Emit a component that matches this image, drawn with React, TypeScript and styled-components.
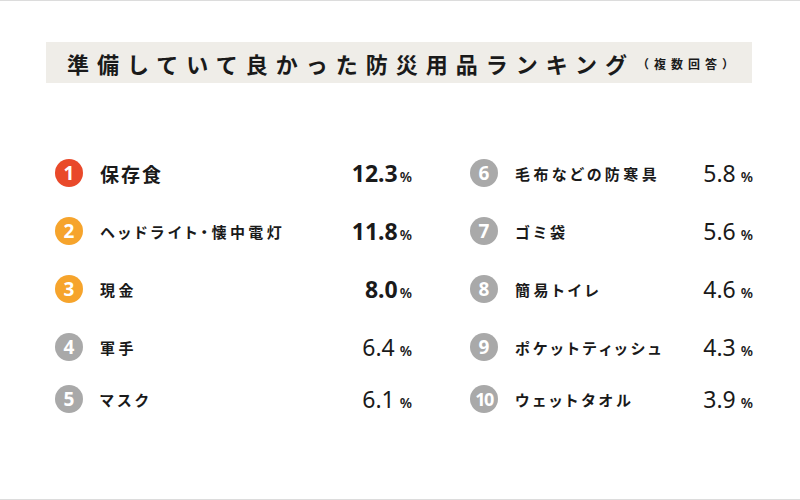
import { createGlobalStyle, styled } from 'styled-components';

const GlobalStyle = createGlobalStyle`
  body {
    margin: 0;
    background: #fff;
    font-family: "Noto Sans", "Noto Sans CJK JP", sans-serif;
    color: #1a1a1a;
  }
`;

type Item = { rank: number; label: string; value: string };

const left: Item[] = [
  { rank: 1, label: '保存食', value: '12.3' },
  { rank: 2, label: 'ヘッドライト・懐中電灯', value: '11.8' },
  { rank: 3, label: '現金', value: '8.0' },
  { rank: 4, label: '軍手', value: '6.4' },
  { rank: 5, label: 'マスク', value: '6.1' },
];

const right: Item[] = [
  { rank: 6, label: '毛布などの防寒具', value: '5.8' },
  { rank: 7, label: 'ゴミ袋', value: '5.6' },
  { rank: 8, label: '簡易トイレ', value: '4.6' },
  { rank: 9, label: 'ポケットティッシュ', value: '4.3' },
  { rank: 10, label: 'ウェットタオル', value: '3.9' },
];

const badgeColor = (rank: number) => {
  if (rank === 1) return '#e9492a';
  if (rank <= 3) return '#f6a42c';
  return '#a9a9a9';
};

const Row = ({ item }: { item: Item }) => (
  <RowWrap>
    <Badge $color={badgeColor(item.rank)} $small={item.rank >= 10}>
      {item.rank}
    </Badge>
    <Label $top={item.rank === 1}>{item.label}</Label>
    <Value $bold={item.rank <= 3}>
      {item.value}
      <Percent $bold={item.rank <= 3}>%</Percent>
    </Value>
  </RowWrap>
);

const App = () => {
  return (
    <>
      <GlobalStyle />
      <Frame>
        <TitleBand>
          <Title>準備していて良かった防災用品ランキング</Title>
          <Sub>（複数回答）</Sub>
        </TitleBand>
        <Columns>
          <Column>
            {left.map((it) => (
              <Row key={it.rank} item={it} />
            ))}
          </Column>
          <Column>
            {right.map((it) => (
              <Row key={it.rank} item={it} />
            ))}
          </Column>
        </Columns>
      </Frame>
    </>
  );
};

export default App;

const Frame = styled.div`
  width: 800px;
  height: 500px;
  box-sizing: border-box;
  border-top: 1px solid #dcdcdc;
  border-bottom: 1px solid #dcdcdc;
  padding: 41px 48px 0 46px;
`;

const TitleBand = styled.div`
  height: 41px;
  background: #efede8;
  display: flex;
  align-items: center;
  padding-left: 21px;
`;

const Title = styled.h1`
  margin: 0;
  font-family: "Noto Sans CJK JP", sans-serif;
  font-size: 22px;
  font-weight: 700;
  letter-spacing: 8px;
  color: #1a1a1a;
`;

const Sub = styled.span`
  font-family: "Noto Sans CJK JP", sans-serif;
  font-size: 12px;
  font-weight: 700;
  letter-spacing: 5px;
  margin-left: 2px;
  margin-top: 2px;
  color: #1a1a1a;
`;

const Columns = styled.div`
  display: grid;
  grid-template-columns: 357px 283px;
  column-gap: 58px;
  margin-top: 76px;
  padding-left: 9px;
`;

const Column = styled.div`
  display: flex;
  flex-direction: column;
  gap: 30px;

  & > :last-child {
    margin-top: -6px;
  }
`;

const RowWrap = styled.div`
  height: 28px;
  display: flex;
  align-items: center;
`;

const Badge = styled.div<{ $color: string; $small: boolean }>`
  width: 28px;
  height: 28px;
  border-radius: 50%;
  background: ${(p) => p.$color};
  color: #fff;
  display: flex;
  align-items: center;
  justify-content: center;
  font-family: "Noto Sans", sans-serif;
  font-weight: 700;
  font-size: ${(p) => (p.$small ? '18px' : '19px')};
  letter-spacing: ${(p) => (p.$small ? '-1.5px' : '0')};
  flex-shrink: 0;
`;

const Label = styled.div<{ $top: boolean }>`
  margin-left: 17px;
  font-family: "Noto Sans CJK JP", sans-serif;
  font-feature-settings: "palt";
  font-weight: 700;
  font-size: ${(p) => (p.$top ? '19px' : '15px')};
  letter-spacing: ${(p) => (p.$top ? '2px' : '3.4px')};
  flex: 1;
  white-space: nowrap;
`;

const Value = styled.div<{ $bold: boolean }>`
  font-family: "Noto Sans", sans-serif;
  font-size: 23px;
  font-weight: ${(p) => (p.$bold ? 700 : 400)};
  white-space: nowrap;
`;

const Percent = styled.span<{ $bold: boolean }>`
  font-size: 14px;
  font-weight: 600;
  margin-left: ${(p) => (p.$bold ? '2px' : '5px')};
`;
